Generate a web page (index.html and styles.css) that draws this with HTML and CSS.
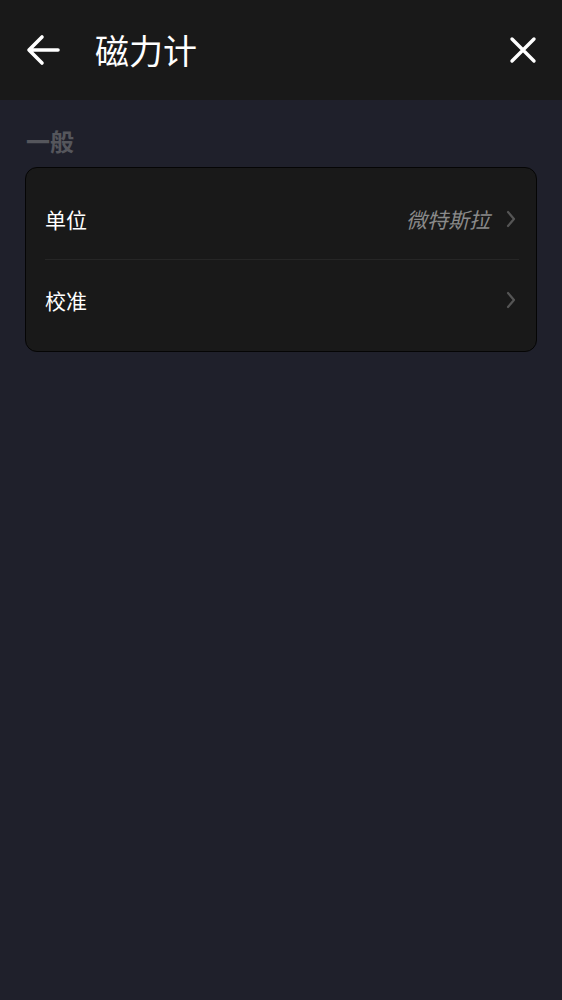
FILE: index.html
```html
<!DOCTYPE html>
<html lang="zh">
<head>
<meta charset="utf-8">
<link rel="stylesheet" href="styles.css">
</head>
<body>
<header class="topbar">
  <svg class="back" width="38" height="38" viewBox="0 0 38 38"><path d="M34 19H6M18 6L5 19l13 13" fill="none" stroke="#fff" stroke-width="3.6" stroke-linecap="round" stroke-linejoin="round"/></svg>
  <h1 class="title">磁力计</h1>
  <svg class="close" width="30" height="30" viewBox="0 0 30 30"><path d="M4 4L26 26M26 4L4 26" fill="none" stroke="#fff" stroke-width="3.4" stroke-linecap="round"/></svg>
</header>
<main class="content">
  <h2 class="section">一般</h2>
  <div class="card">
    <div class="row">
      <span class="label">单位</span>
      <span class="value">微特斯拉</span>
      <svg class="chev" width="10" height="18" viewBox="0 0 10 18"><path d="M2 2l6 7-6 7" fill="none" stroke="#555" stroke-width="2.2" stroke-linecap="round" stroke-linejoin="round"/></svg>
    </div>
    <div class="divider"></div>
    <div class="row">
      <span class="label">校准</span>
      <svg class="chev" width="10" height="18" viewBox="0 0 10 18"><path d="M2 2l6 7-6 7" fill="none" stroke="#555" stroke-width="2.2" stroke-linecap="round" stroke-linejoin="round"/></svg>
    </div>
  </div>
</main>
</body>
</html>
```
FILE: styles.css
```css
html, body {
  margin: 0;
  padding: 0;
  background: #1f202b;
  font-family: "Noto Sans CJK SC", "Noto Sans", sans-serif;
  height: 100%;
}
.topbar {
  height: 100px;
  background: #191919;
  display: flex;
  align-items: center;
  padding: 0 24px 0 24px;
  box-sizing: border-box;
}
.back { flex: none; }
.title {
  margin: 0 0 0 33px;
  flex: 1;
  color: #fff;
  font-size: 34px;
  font-weight: 400;
  line-height: 1;
}
.close { flex: none; }
.content {
  padding: 25px 25px 0;
}
.section {
  margin: 0 0 10px 1px;
  color: #55565c;
  font-size: 24px;
  font-weight: 700;
  line-height: 32px;
}
.card {
  background: #191919;
  border: 1px solid #050505;
  border-radius: 12px;
  padding: 11px 18px 11px 19px;
}
.row {
  height: 80px;
  display: flex;
  align-items: center;
}
.label {
  flex: 1;
  color: #fff;
  font-size: 21px;
  line-height: 1;
}
.value {
  color: #8a8a8a;
  font-size: 21px;
  font-style: italic;
  margin-right: 16px;
}
.chev { flex: none; margin-right: 2px; }
.divider {
  height: 1px;
  background: #262626;
  margin-right: -1px;
}
```
